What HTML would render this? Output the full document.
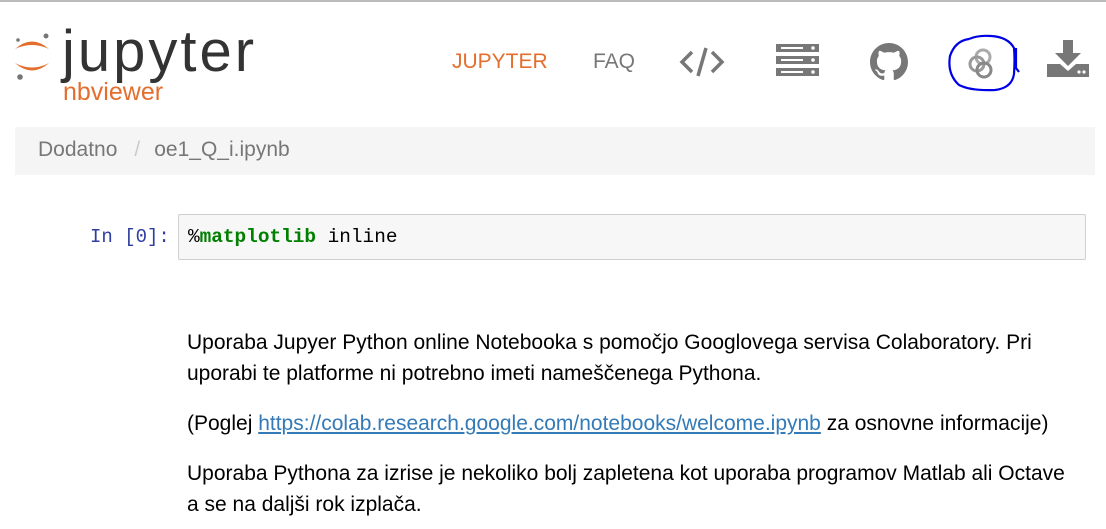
<!DOCTYPE html>
<html><head><meta charset="utf-8"><style>
body{margin:0;width:1106px;height:529px;overflow:hidden;background:#fff;font-family:"Liberation Sans",sans-serif;position:relative}
.a{position:absolute}
</style></head><body>
<div class="a" style="left:0;top:0;width:1106px;height:2px;background:#bbb"></div>
<svg class="a" style="left:12px;top:30px" width="40" height="54" viewBox="0 0 40 54">
<path d="M3 19 Q20 4 37 19 Q20 11 3 19Z" fill="#e46e2e"/>
<path d="M3 33 Q20 48 37 33 Q20 42 3 33Z" fill="#e46e2e"/>
<circle cx="34" cy="6" r="2.5" fill="#767677"/><circle cx="6" cy="10" r="1.8" fill="#767677"/><circle cx="8" cy="47" r="2.8" fill="#767677"/>
</svg>
<div class="a" style="left:62px;top:20px;font-size:58px;color:#333;letter-spacing:3px;line-height:64px">jupyter</div>
<div class="a" style="left:63px;top:77px;font-size:25px;color:#e46e2e;line-height:30px">nbviewer</div>
<div class="a" style="left:452px;top:50px;font-size:21px;color:#e46e2e">JUPYTER</div>
<div class="a" style="left:593px;top:50px;font-size:21px;color:#777">FAQ</div>
<svg class="a" style="left:678px;top:44px" width="48" height="36" viewBox="0 0 48 36"><g stroke="#777" stroke-width="3.5" fill="none"><path d="M14 8 L4 18 L14 28"/><path d="M34 8 L44 18 L34 28"/><path d="M28 4 L20 32"/></g></svg>
<svg class="a" style="left:776px;top:43px" width="44" height="36" viewBox="0 0 44 36"><g fill="#777"><rect x="0" y="1" width="43" height="8"/><rect x="0" y="13" width="43" height="8"/><rect x="0" y="25" width="43" height="8"/></g><g fill="#fff"><rect x="5" y="4" width="22" height="2"/><rect x="5" y="16" width="22" height="2"/><rect x="5" y="28" width="22" height="2"/><circle cx="37" cy="5" r="1.8"/><circle cx="37" cy="17" r="1.8"/><circle cx="37" cy="29" r="1.8"/></g></svg>
<svg class="a" style="left:870px;top:43px" width="38" height="38" viewBox="0 0 16 16"><path fill="#777" d="M8 0C3.58 0 0 3.58 0 8c0 3.54 2.290 6.530 5.470 7.590.4.07.55-.17.55-.38 0-.19-.01-.82-.01-1.49-2.01.37-2.53-.49-2.69-.94-.09-.23-.48-.94-.82-1.13-.28-.15-.68-.52-.01-.53.63-.01 1.08.58 1.23.82.72 1.21 1.87.87 2.33.66.07-.52.28-.87.51-1.07-1.78-.2-3.64-.89-3.64-3.950 0-.87.31-1.59.82-2.15-.08-.2-.36-1.02.08-2.12 0 0 .67-.21 2.2.82.64-.18 1.32-.27 2-.27.68 0 1.36.09 2 .27 1.53-1.04 2.2-.82 2.2-.82.44 1.1.16 1.92.08 2.12.51.56.82 1.27.82 2.15 0 3.07-1.87 3.75-3.65 3.95.29.25.54.730.54 1.48 0 1.07-.01 1.93-.01 2.2 0 .21.15.46.55.38A8.013 8.013 0 0016 8c0-4.42-3.58-8-8-8z"/></svg>
<svg class="a" style="left:945px;top:34px" width="80" height="58" viewBox="0 0 80 58">
<g fill="none" stroke-width="3"><circle cx="38" cy="23" r="7" stroke="#aaa"/><circle cx="32" cy="30" r="7" stroke="#999"/><circle cx="39" cy="36" r="7" stroke="#888"/></g>
<path d="M24 5 Q10 7 5 22 Q2 40 14 51 Q26 57 50 56 Q67 54 69 40 Q70 25 69 14 Q63 3 46 2 Q33 1 24 5 M71 14 L71 34 L74 38" fill="none" stroke="#0000e6" stroke-width="2.2"/>
</svg>
<svg class="a" style="left:1047px;top:40px" width="42" height="38" viewBox="0 0 42 38"><g fill="#777"><rect x="16" y="0" width="10" height="14"/><path d="M8 13 L34 13 L21 26Z"/><path d="M0 24 L13 24 L21 31 L29 24 L42 24 L42 37 L0 37Z"/></g><circle cx="32" cy="32" r="1.6" fill="#fff"/><circle cx="37" cy="32" r="1.6" fill="#fff"/></svg>
<div class="a" style="left:15px;top:127px;width:1080px;height:48px;background:#f5f5f5"></div>
<div class="a" style="left:38px;top:138px;font-size:21px;color:#777">Dodatno<span style="color:#ccc;padding:0 14px 0 17px">/</span>oe1_Q_i.ipynb</div>
<div class="a" style="left:90px;top:226px;font-family:'Liberation Mono',monospace;font-size:19px;color:#303f9f">In [0]:</div>
<div class="a" style="left:178px;top:214px;width:906px;height:44px;background:#f7f7f7;border:1px solid #cfcfcf;border-radius:2px"></div>
<div class="a" style="left:188px;top:226px;font-family:'Liberation Mono',monospace;font-size:19.4px;color:#000">%<b style="color:#008000">matplotlib</b> inline</div>
<div class="a" style="left:187px;top:327px;width:880px;font-size:21px;color:#000;line-height:31px">
<div>Uporaba Jupyer Python online Notebooka s pomočjo Googlovega servisa Colaboratory. Pri uporabi te platforme ni potrebno imeti nameščenega Pythona.</div>
<div style="margin-top:19px">(Poglej <span style="color:#337ab7;text-decoration:underline">https://colab.research.google.com/notebooks/welcome.ipynb</span> za osnovne informacije)</div>
<div style="margin-top:19px">Uporaba Pythona za izrise je nekoliko bolj zapletena kot uporaba programov Matlab ali Octave a se na daljši rok izplača.</div>
</div>
</body></html>
